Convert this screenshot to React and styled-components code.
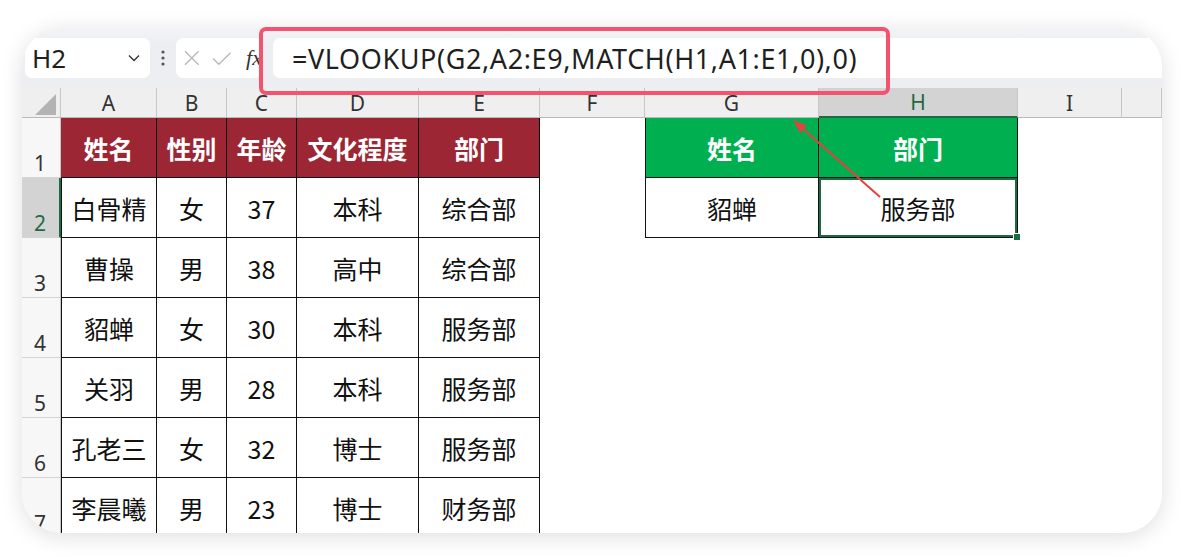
import React from 'react';
import styled, { createGlobalStyle } from 'styled-components';

const GlobalStyle = createGlobalStyle`
  html, body {
    margin: 0;
    padding: 0;
    background: #ffffff;
  }
  body {
    font-family: "Noto Sans", "Noto Sans CJK SC", sans-serif;
  }
`;

const Page = styled.div`
  padding: 27px 0 0 22px;
  width: 1185px;
  height: 556px;
  box-sizing: border-box;
`;

const Card = styled.div`
  position: relative;
  width: 1140px;
  height: 506px;
  border-radius: 40px;
  overflow: hidden;
  background: #ffffff;
  box-shadow: 0 4px 22px rgba(0, 0, 0, 0.13);
`;

const FormulaBar = styled.div`
  display: flex;
  align-items: flex-start;
  height: 61px;
  padding: 11px 0 0 3px;
  background: linear-gradient(#f3f4f6, #eceef1 30%);
  box-sizing: border-box;
`;

const NameBox = styled.div`
  display: flex;
  align-items: center;
  justify-content: space-between;
  width: 125px;
  height: 40px;
  padding: 0 10px 0 7px;
  box-sizing: border-box;
  background: #ffffff;
  border-radius: 7px;
  font-size: 26px;
  color: #1f1f1f;
`;

const Dots = styled.div`
  display: flex;
  align-items: center;
  justify-content: center;
  width: 26px;
  height: 40px;
`;

const EditBox = styled.div`
  display: flex;
  align-items: center;
  gap: 12px;
  width: 86px;
  height: 40px;
  padding-left: 8px;
  box-sizing: border-box;
  background: #ffffff;
  border-radius: 7px;
`;

const Fx = styled.span`
  font-family: "Liberation Serif", serif;
  font-style: italic;
  font-size: 22px;
  color: #333;
  margin-left: 3px;
`;

const FormulaInput = styled.div`
  flex: 1;
  display: flex;
  align-items: center;
  height: 40px;
  margin-left: 11px;
  padding-left: 19px;
  background: #ffffff;
  border-radius: 7px 0 0 7px;
  font-size: 27px;
  letter-spacing: 0.6px;
  color: #1f1f1f;
  white-space: nowrap;
`;

const Sheet = styled.div`
  display: grid;
  grid-template-columns: 39px 96px 70px 70px 122px 121px 105px 174px 199px 104px 1fr;
  grid-template-rows: 30px repeat(7, 60px);
`;

const Corner = styled.div`
  background: #efefef;
  border-right: 1px solid #c6c6c6;
  border-bottom: 1px solid #b9b9b9;
  display: flex;
  align-items: flex-end;
  justify-content: flex-end;
  padding: 0 3px 1px 0;
  box-sizing: border-box;
`;

const ColHead = styled.div`
  display: flex;
  align-items: center;
  justify-content: center;
  background: ${(p) => (p.$active ? '#d3d3d3' : '#efefef')};
  color: ${(p) => (p.$active ? '#1e6b41' : '#333')};
  border-right: 1px solid #c6c6c6;
  border-bottom: ${(p) => (p.$active ? '2px solid #1e6b41' : '1px solid #b9b9b9')};
  box-sizing: border-box;
  font-size: 21px;
`;

const RowHead = styled.div`
  display: flex;
  align-items: flex-end;
  padding: 0 0 0 12px;
  box-sizing: border-box;
  background: ${(p) => (p.$active ? '#d3d3d3' : '#f7f7f7')};
  color: ${(p) => (p.$active ? '#1e6b41' : '#333')};
  border-right: ${(p) => (p.$active ? '2px solid #1e6b41' : '1px solid #c6c6c6')};
  border-bottom: 1px solid #d4d4d4;
  font-size: 21px;
`;

const Cell = styled.div`
  position: relative;
  display: flex;
  align-items: center;
  justify-content: center;
  box-sizing: border-box;
  font-family: "Noto Sans CJK SC", sans-serif;
  font-size: 25px;
  font-weight: ${(p) => (p.$head ? 700 : 400)};
  color: ${(p) => (p.$head ? '#ffffff' : '#111')};
  background: ${(p) => p.$bg || '#ffffff'};
  border-right: ${(p) => (p.$line ? '1px solid #111' : 'none')};
  border-bottom: ${(p) => (p.$line ? '1px solid #111' : 'none')};
  border-left: ${(p) => (p.$first ? '1px solid #111' : 'none')};
  ${(p) =>
    p.$selected &&
    `
    box-shadow: inset 0 0 0 2px #1e6b41;
    &::after {
      content: '';
      position: absolute;
      right: -4px;
      bottom: -4px;
      width: 6px;
      height: 6px;
      background: #1e6b41;
      border: 1px solid #fff;
      z-index: 2;
    }
  `}
`;

const Highlight = styled.div`
  position: absolute;
  left: 237px;
  top: 0;
  width: 631px;
  height: 68px;
  border: 4px solid #f3536c;
  border-radius: 7px;
  box-sizing: border-box;
  pointer-events: none;
`;

const Arrow = styled.svg`
  position: absolute;
  left: 760px;
  top: 85px;
  overflow: visible;
`;

const RED = '#9d2634';
const GREEN = '#00b050';

const columns = ['A', 'B', 'C', 'D', 'E', 'F', 'G', 'H', 'I', ''];

const rows = [
  ['白骨精', '女', '37', '本科', '综合部'],
  ['曹操', '男', '38', '高中', '综合部'],
  ['貂蝉', '女', '30', '本科', '服务部'],
  ['关羽', '男', '28', '本科', '服务部'],
  ['孔老三', '女', '32', '博士', '服务部'],
  ['李晨曦', '男', '23', '博士', '财务部'],
];

const header = ['姓名', '性别', '年龄', '文化程度', '部门'];

const App = () => {
  const renderRow = (rowNum) => {
    const isHead = rowNum === 1;
    const data = isHead ? header : rows[rowNum - 2];
    const cells = data.map((text, i) => (
      <Cell
        key={`${rowNum}-t${i}`}
        $line
        $head={isHead}
        $bg={isHead ? RED : undefined}
        $first={i === 0 && !isHead}
      >
        {text}
      </Cell>
    ));
    cells.push(<Cell key={`${rowNum}-f`} />);
    if (rowNum === 1) {
      cells.push(<Cell key="1-g" $line $first $head $bg={GREEN}>姓名</Cell>);
      cells.push(<Cell key="1-h" $line $head $bg={GREEN}>部门</Cell>);
    } else if (rowNum === 2) {
      cells.push(<Cell key="2-g" $line $first>貂蝉</Cell>);
      cells.push(<Cell key="2-h" $line $selected>服务部</Cell>);
    } else {
      cells.push(<Cell key={`${rowNum}-g`} />);
      cells.push(<Cell key={`${rowNum}-h`} />);
    }
    cells.push(<Cell key={`${rowNum}-i`} />);
    cells.push(<Cell key={`${rowNum}-j`} />);
    return [
      <RowHead key={`r${rowNum}`} $active={rowNum === 2}>{rowNum}</RowHead>,
      ...cells,
    ];
  };

  return (
    <>
      <GlobalStyle />
      <Page>
        <Card>
          <FormulaBar>
            <NameBox>
              <span>H2</span>
              <svg width="12" height="8" viewBox="0 0 12 8">
                <path d="M1 1.5 L6 6.5 L11 1.5" fill="none" stroke="#333" strokeWidth="1.3" />
              </svg>
            </NameBox>
            <Dots>
              <svg width="4" height="16" viewBox="0 0 4 16">
                <circle cx="2" cy="2" r="1.6" fill="#555" />
                <circle cx="2" cy="8" r="1.6" fill="#555" />
                <circle cx="2" cy="14" r="1.6" fill="#555" />
              </svg>
            </Dots>
            <EditBox>
              <svg width="16" height="16" viewBox="0 0 16 16">
                <path d="M1 1 L15 15 M15 1 L1 15" stroke="#b9b9b9" strokeWidth="1.4" />
              </svg>
              <svg width="20" height="15" viewBox="0 0 20 15">
                <path d="M1 7.5 L7 13.5 L19 1.5" fill="none" stroke="#b9b9b9" strokeWidth="1.4" />
              </svg>
              <Fx>fx</Fx>
            </EditBox>
            <FormulaInput>=VLOOKUP(G2,A2:E9,MATCH(H1,A1:E1,0),0)</FormulaInput>
          </FormulaBar>
          <Sheet>
            <Corner>
              <svg width="22" height="22" viewBox="0 0 22 22">
                <polygon points="21,0 21,21 0,21" fill="#b3b3b3" />
              </svg>
            </Corner>
            {columns.map((c, i) => (
              <ColHead key={`c${i}`} $active={c === 'H'}>{c}</ColHead>
            ))}
            {[1, 2, 3, 4, 5, 6, 7].map((r) => renderRow(r))}
          </Sheet>
          <Highlight />
          <Arrow width="110" height="100" viewBox="0 0 110 100">
            <line x1="98" y1="85" x2="21.5" y2="17.3" stroke="#e8403f" strokeWidth="2" />
            <polygon points="11,8 24.8,13.6 18.2,21" fill="#e8403f" />
          </Arrow>
        </Card>
      </Page>
    </>
  );
};

export default App;
